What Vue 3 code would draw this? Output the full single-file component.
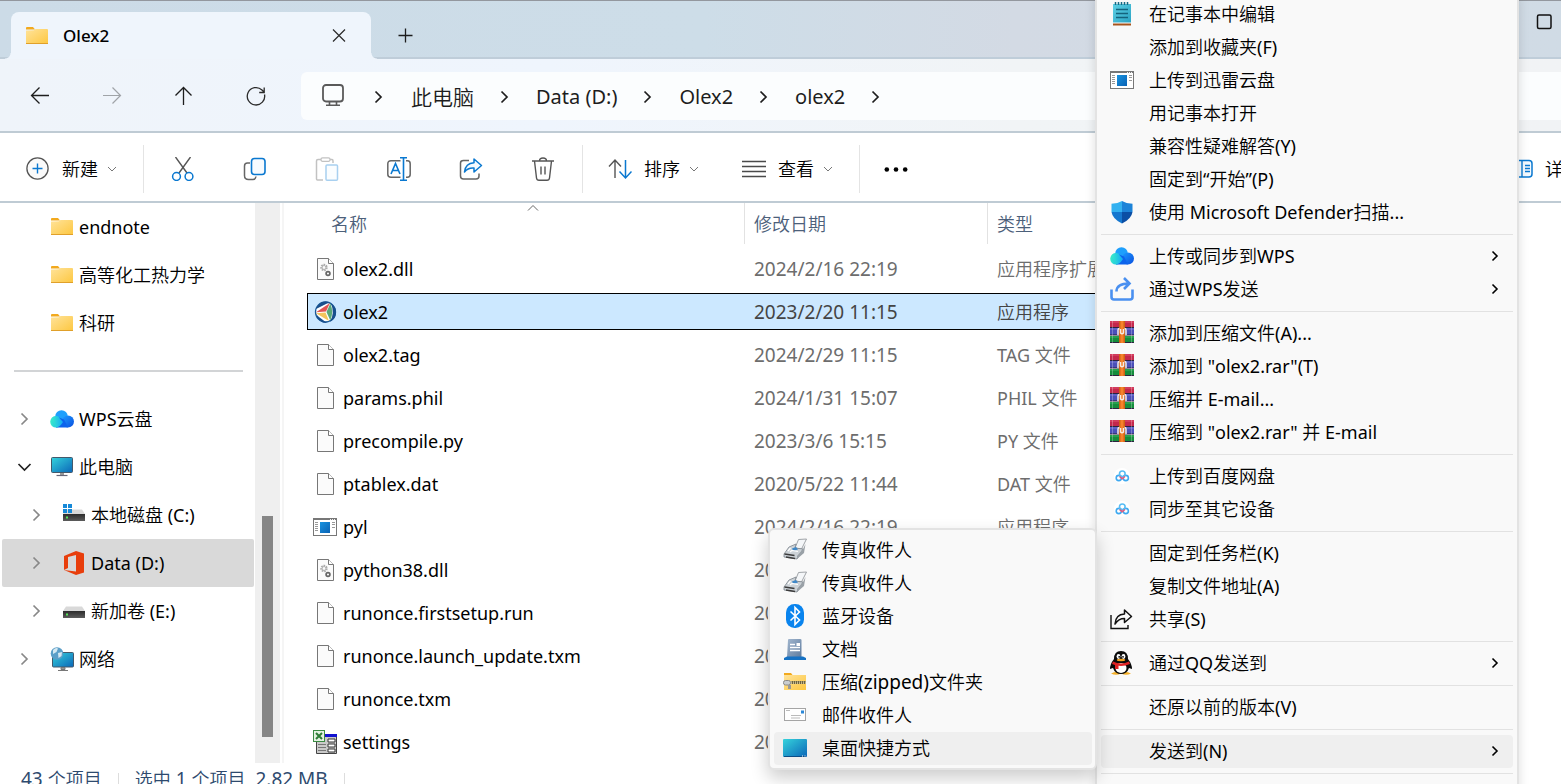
<script setup>
import { h } from 'vue'

// Splits a label into Chinese and Latin runs so that each script gets its own size.
const Mix = (props) =>
  (props.text.match(/[\u2e80-\u9fff]+|[^\u2e80-\u9fff]+/g) || []).map((run) =>
    h('span', { class: /[\u2e80-\u9fff]/.test(run) ? 'run-zh' : 'run-latin' }, run)
  )
Mix.props = ['text']

const crumbs = ['此电脑', 'Data (D:)', 'Olex2', 'olex2']
const tools = [
  ['cut', '剪切'], ['copy', '复制'], ['paste', '粘贴'],
  ['rename', '重命名'], ['share', '共享'], ['trash', '删除'],
]
const quick = ['endnote', '高等化工热力学', '科研']
const tree = [
  { text: 'WPS云盘', icon: 'cloud' },
  { text: '此电脑', icon: 'pc', open: true },
  { text: '本地磁盘 (C:)', icon: 'diskwin', sub: true },
  { text: 'Data (D:)', icon: 'office', sub: true, active: true },
  { text: '新加卷 (E:)', icon: 'disk', sub: true },
  { text: '网络', icon: 'network' },
]
const files = [
  ['dll', 'olex2.dll', '2024/2/16 22:19', '应用程序扩展'],
  ['olex', 'olex2', '2023/2/20 11:15', '应用程序'],
  ['file', 'olex2.tag', '2024/2/29 11:15', 'TAG 文件'],
  ['file', 'params.phil', '2024/1/31 15:07', 'PHIL 文件'],
  ['file', 'precompile.py', '2023/3/6 15:15', 'PY 文件'],
  ['file', 'ptablex.dat', '2020/5/22 11:44', 'DAT 文件'],
  ['program', 'pyl', '2024/2/16 22:19', '应用程序'],
  ['dll', 'python38.dll', '20', ''],
  ['file', 'runonce.firstsetup.run', '20', ''],
  ['file', 'runonce.launch_update.txm', '20', ''],
  ['file', 'runonce.txm', '20', ''],
  ['xls', 'settings', '20', ''],
]
const menu = [
  [['在记事本中编辑', 'notepad'], ['添加到收藏夹(F)'], ['上传到迅雷云盘', 'program'], ['用记事本打开'],
    ['兼容性疑难解答(Y)'], ['固定到“开始”(P)'], ['使用 Microsoft Defender扫描...', 'shield']],
  [['上传或同步到WPS', 'cloud', true], ['通过WPS发送', 'wpssend', true]],
  [['添加到压缩文件(A)...', 'rar'], ['添加到 "olex2.rar"(T)', 'rar'], ['压缩并 E-mail...', 'rar'],
    ['压缩到 "olex2.rar" 并 E-mail', 'rar']],
  [['上传到百度网盘', 'baidu'], ['同步至其它设备', 'baidu']],
  [['固定到任务栏(K)'], ['复制文件地址(A)'], ['共享(S)', 'shareout']],
  [['通过QQ发送到', 'qq', true]],
  [['还原以前的版本(V)']],
  [['发送到(N)', '', true]],
]
const sendTo = [
  ['传真收件人', 'fax'], ['传真收件人', 'fax'], ['蓝牙设备', 'bt'], ['文档', 'docs'],
  ['压缩(zipped)文件夹', 'zip'], ['邮件收件人', 'mail'], ['桌面快捷方式', 'desktop'],
]
</script>

<template>
  <div class="window">
    <svg class="sheet" aria-hidden="true">
      <defs>
        <linearGradient id="gFolder" x1="0" y1="0" x2="1" y2="1"><stop offset="0" stop-color="#ffe39a" /><stop offset="1" stop-color="#fdc740" /></linearGradient>
        <linearGradient id="gScreen" x1="0" y1="0" x2="1" y2="1"><stop offset="0" stop-color="#35d3dc" /><stop offset="1" stop-color="#0b66b8" /></linearGradient>
        <linearGradient id="gCloud" x1="0" y1="0" x2="1" y2="0"><stop offset="0" stop-color="#38ecc8" /><stop offset="1" stop-color="#12a8f8" /></linearGradient>
        <linearGradient id="gCloudB" x1="0" y1="0" x2="1" y2="1"><stop offset="0" stop-color="#1d9bff" /><stop offset="1" stop-color="#0a4fe0" /></linearGradient>
        <linearGradient id="gApp" x1="0" y1="0" x2="1" y2="1"><stop offset="0" stop-color="#1893e0" /><stop offset="1" stop-color="#0a62b4" /></linearGradient>
        <linearGradient id="gNote" x1="0" y1="0" x2="1" y2="1"><stop offset="0" stop-color="#5fd0e4" /><stop offset="1" stop-color="#2aa3c4" /></linearGradient>
        <linearGradient id="gDoc" x1="0" y1="0" x2="1" y2="1"><stop offset="0" stop-color="#a3b7cf" /><stop offset="1" stop-color="#5f7c9f" /></linearGradient>
        <linearGradient id="gDrive" x1="0" y1="0" x2="0" y2="1"><stop offset="0" stop-color="#2c2c2c" /><stop offset="1" stop-color="#5c5c5c" /></linearGradient>
        <linearGradient id="gGold" x1="0" y1="0" x2="1" y2="0"><stop offset="0" stop-color="#c65a10" /><stop offset=".5" stop-color="#ff8a30" /><stop offset="1" stop-color="#c65a10" /></linearGradient>
      </defs>
      <symbol id="folder" viewBox="0 0 24 24"><path d="M1 4a1 1 0 0 1 1-1h6l2 2.500H1z" fill="#f2a91d" /><path d="M1 6.500l8-.3 1.500-1.200H22a1 1 0 0 1 1 1V19a1 1 0 0 1-1 1H2a1 1 0 0 1-1-1z" fill="url(#gFolder)" /><path d="M1 19.500h22" stroke="#e0a02a" /></symbol>
      <symbol id="close" viewBox="0 0 24 24"><path d="M6 5.500l12 12M18 5.500L6 17.500" stroke="#2a2a2a" stroke-width="1.200" /></symbol>
      <symbol id="plus" viewBox="0 0 24 24"><path d="M12.500 4.500v14M5.500 11.500h14" stroke="#1d1d1d" stroke-width="1.300" /></symbol>
      <symbol id="back" viewBox="0 0 24 24"><path d="M21 11.500H3.500M11.500 3.500l-8 8 8 8" fill="none" stroke="currentColor" stroke-width="1.300" /></symbol>
      <symbol id="fwd" viewBox="0 0 24 24"><path d="M3 11.500h17.500M12.500 3.500l8 8-8 8" fill="none" stroke="#a0a4a8" stroke-width="1.200" /></symbol>
      <symbol id="up" viewBox="0 0 24 24"><path d="M11.500 21V3.500M3.500 11.500l8-8 8 8" fill="none" stroke="#1d1d1d" stroke-width="1.300" /></symbol>
      <symbol id="refresh" viewBox="0 0 24 24"><path d="M20.500 10.500A8.700 8.700 0 1 1 18 6l2 2M20.200 3.500V8.500h-5" fill="none" stroke="#2a2a2a" stroke-width="1.300" /></symbol>
      <symbol id="monitor" viewBox="0 0 24 24"><rect x="2" y="1" width="20" height="16.500" rx="3" fill="none" stroke="#5a5a5a" stroke-width="1.800" /><path d="M8.500 17.500v4M15.500 17.500v4M5 21.200h14" stroke="#5a5a5a" stroke-width="1.600" /></symbol>
      <symbol id="right" viewBox="0 0 24 24"><path d="M9.500 6.500l5.500 5.500L9.500 17.500" fill="none" stroke="currentColor" stroke-width="1.700" /></symbol>
      <symbol id="go" viewBox="0 0 24 24"><path d="M9.500 7.500l4.500 4.500-4.500 4.500" fill="none" stroke="currentColor" stroke-width="1.600" /></symbol>
      <symbol id="down" viewBox="0 0 24 24"><path d="M6.500 9l6 6 6-6" fill="none" stroke="currentColor" stroke-width="1.700" /></symbol>
      <symbol id="caret" viewBox="0 0 12 12"><path d="M2 4l4 4 4-4" fill="none" stroke="#777" /></symbol>
      <symbol id="new" viewBox="0 0 24 24"><circle cx="11.500" cy="11.500" r="10.600" fill="#fafafa" stroke="#555" stroke-width="1.300" /><path d="M11.500 6.500v10M6.500 11.500h10" stroke="#0a78d0" stroke-width="1.400" /></symbol>
      <symbol id="cut" viewBox="0 0 24 24"><path d="M4.500 0l11.500 16M19.500 0L8 16" stroke="#555" stroke-width="1.400" fill="none" /><circle cx="5.500" cy="19.500" r="3.900" fill="#fff" stroke="#0a78d0" stroke-width="1.500" /><circle cx="18" cy="19.500" r="3.900" fill="#fff" stroke="#0a78d0" stroke-width="1.500" /></symbol>
      <symbol id="copy" viewBox="0 0 24 24"><path d="M7 6H4.500Q1.500 6 1.500 9v9.500q0 4 4 4H10q2.500 0 3-3" fill="none" stroke="#666" stroke-width="1.500" /><rect x="8.500" y="1.500" width="13.500" height="16" rx="3" fill="#f7fbff" stroke="#0a78d0" stroke-width="1.600" /></symbol>
      <symbol id="paste" viewBox="0 0 24 24"><path d="M7 2.500H3q-1.500 0-1.500 1.500v18q0 1 1 1H8M14 2.500h3q1 0 1 1.500V6" fill="none" stroke="#c2c2c2" stroke-width="1.500" /><rect x="6" y=".8" width="9" height="3.500" rx="1.500" fill="#fff" stroke="#c2c2c2" stroke-width="1.300" /><rect x="11" y="8" width="11.500" height="15.200" rx="1" fill="#fafdff" stroke="#a8d0f0" stroke-width="1.500" /></symbol>
      <symbol id="rename" viewBox="0 0 24 24"><path d="M13.500 3.800H4q-3.200 0-3.200 3v10.500q0 3 3.200 3h9.500M19 3.800h1.500q2.700 0 2.700 3v10.500q0 3-2.700 3H19" fill="none" stroke="#666" stroke-width="1.500" /><path d="M4 17L8.500 6.500 13 17M5.500 13.500h6M16.500.8v22.400M13 .8h7M13 23.200h7" fill="none" stroke="#0a78d0" stroke-width="1.600" /></symbol>
      <symbol id="share" viewBox="0 0 24 24"><path d="M10 3.500H4.500Q1.500 3.500 1.500 6v13q0 3 3 3H17q3 0 3-3v-2.500" fill="none" stroke="#666" stroke-width="1.500" /><path d="M15 2l7.500 6.500L15 15v-4q-6-.5-9.500 4Q6.500 6 15 5.700z" fill="#f4faff" stroke="#0a78d0" stroke-width="1.500" stroke-linejoin="round" /></symbol>
      <symbol id="trash" viewBox="0 0 24 24"><path d="M1 4h22M3.500 4l2 17q.3 2.300 2.500 2.300h8q2.200 0 2.500-2.300l2-17M8.500 4q0-3 3.500-3t3.500 3M10 9.500v8M14 9.500v8" fill="none" stroke="#555" stroke-width="1.400" /></symbol>
      <symbol id="sort" viewBox="0 0 24 24"><path d="M7 21V3M1 9.500L7 3l6 6.500" fill="none" stroke="#555" stroke-width="1.400" /><path d="M17.500 3v18M11.500 14.500l6 6.500 6-6.500" fill="none" stroke="#0a78d0" stroke-width="1.500" /></symbol>
      <symbol id="lines" viewBox="0 0 24 24"><path d="M0 4.500h24M0 9.500h24M0 14.500h24M0 19.500h24" stroke="#4a4a4a" stroke-width="1.300" /></symbol>
      <symbol id="dots" viewBox="0 0 24 24"><circle cx="2.800" cy="12.500" r="2.300" /><circle cx="12" cy="12.500" r="2.300" /><circle cx="21.200" cy="12.500" r="2.300" /></symbol>
      <symbol id="details" viewBox="0 0 24 24"><rect x="1" y="3.500" width="22" height="16.500" rx="3" fill="#f4faff" stroke="#0a78d0" stroke-width="1.500" /><path d="M13 4v16M16 8.500h5M16 11.500h5M16 14.500h5" stroke="#0a78d0" stroke-width="1.400" /></symbol>
      <symbol id="max" viewBox="0 0 24 24"><rect x="5.500" y="5" width="13.500" height="13.500" rx="1.500" fill="none" stroke="#111" stroke-width="1.500" /></symbol>
      <symbol id="cloud" viewBox="0 0 24 24"><circle cx="11.500" cy="9.500" r="6.300" fill="#1e9ffc" /><circle cx="6" cy="14.800" r="5.800" fill="url(#gCloud)" /><circle cx="18" cy="14.600" r="6" fill="url(#gCloudB)" /><path d="M6 20.600h12l-4-8-5-2z" fill="#0c63ec" /><path d="M6 20.600Q10 20 13 15L8 9.400Q3 8.800 1.500 11.500z" fill="url(#gCloud)" /></symbol>
      <symbol id="pc" viewBox="0 0 24 24"><rect x="1.500" y="2.500" width="21" height="15" rx="1" fill="url(#gScreen)" stroke="#44596b" /><path d="M10 18h4v2h-4z" fill="#999" /><path d="M6.500 20.500h11" stroke="#667" stroke-width="1.200" /></symbol>
      <symbol id="network" viewBox="0 0 24 24"><rect x="2.500" y="5.500" width="21" height="14.500" rx="1" fill="url(#gScreen)" stroke="#44596b" /><path d="M8 23.500h10M11 20.500h4v2h-4z" stroke="#777" fill="#999" /><circle cx="7" cy="6.500" r="6.300" fill="#5c9fc8" /><path d="M3 3q3-3 5-1.500L6.500 5 3 7zM8 6l4-1-.5 4-3 2z" fill="#d6e9f2" /></symbol>
      <symbol id="disk" viewBox="0 0 24 24"><path d="M4 7.500h16l3 4.500H1z" fill="#d9d9d9" /><rect x="1" y="12" width="22" height="7" fill="url(#gDrive)" /><rect x="4" y="14.500" width="2" height="2" fill="#56e35a" /></symbol>
      <symbol id="diskwin" viewBox="0 0 24 24"><path d="M4 6.500h16l3 4.500H1z" fill="#d9d9d9" /><rect x="1" y="11" width="22" height="7" fill="url(#gDrive)" /><rect x="4" y="13.500" width="2" height="2" fill="#56e35a" /><path d="M1 1h4v4H1zM6 1h4v4H6zM1 6h4v4H1zM6 6h4v4H6z" fill="#1689d8" /></symbol>
      <symbol id="office" viewBox="0 0 24 24"><path d="M2 5l12-5 8 2.500v19L14 24 2 19l12 1.500V4L6 6v11l-4 2z" fill="#e83e0c" /></symbol>
      <symbol id="file" viewBox="0 0 24 24"><path d="M4.500 1.500h11l5 5v16h-16z" fill="#fbfbfb" stroke="#777" /><path d="M15.500 1.500v5h5" fill="#fff" stroke="#777" /></symbol>
      <symbol id="dll" viewBox="0 0 24 24"><path d="M4.500 1.500h11l5 5v16h-16z" fill="#fbfbfb" stroke="#777" /><path d="M15.500 1.500v5h5" fill="#fff" stroke="#777" /><circle cx="11" cy="10.500" r="2.600" fill="none" stroke="#aaa" stroke-width="2.200" stroke-dasharray="1.500 .8" /><circle cx="11" cy="10.500" r="2" fill="none" stroke="#b5b5b5" /><circle cx="15" cy="16.500" r="1.900" fill="none" stroke="#666" stroke-width="1.700" /></symbol>
      <symbol id="olex" viewBox="0 0 24 24"><circle cx="12.500" cy="12" r="10" fill="#fff" stroke="#1a5a98" stroke-width="1.300" /><path d="M16 2A10.500 10.500 0 0 0 3 9l12-6z" fill="#174f8d" /><path d="M3 14a10.500 10.500 0 0 0 11 9l-8-6z" fill="#174f8d" /><path d="M18 3.500a10.500 10.500 0 0 1-1 18.500q5-9 1-18.500z" fill="#174f8d" /><path d="M17 3L3 12.200l10-.7z" fill="#e05555" /><path d="M3 13.200L16 21l-3.500-8.500z" fill="#f3c55c" /><path d="M17.300 3.500L13.500 12l3.800 8.500q3.700-8.500 0-17z" fill="#58a878" /></symbol>
      <symbol id="program" viewBox="0 0 24 24"><rect x=".5" y="3.500" width="23" height="17" fill="#fff" stroke="#777" /><path d="M0 4.500h24" stroke="#777" /><path d="M17 4.500h5" stroke="#eee" stroke-dasharray="1 1" /><rect x="7" y="7" width="10" height="11" fill="url(#gApp)" /><path d="M2 7.500h3M2 9.500h3M2 11.500h3M2 13.500h3M2 15.500h3M19 7.500h3M19 9.500h3M19 12.500h3" stroke="#999" /></symbol>
      <symbol id="xls" viewBox="0 0 24 24"><path d="M3.500 4.500h20v19h-20z" fill="#c9c9c9" stroke="#444" /><path d="M12 4h12v3H12z" fill="#1212d0" /><path d="M5 14.500h8M5 17.500h8M5 20.500h8" stroke="#777" /><path d="M15 9h7v3h-7zM15 14h7v3h-7zM15 19h7v3h-7z" fill="#fff" stroke="#333" /><rect x=".5" y=".5" width="11" height="11" fill="#e4f2e2" stroke="#3a8a42" /><path d="M3 3l6 6M9 3L3 9" stroke="#2d7d36" stroke-width="2" /></symbol>
      <symbol id="notepad" viewBox="0 0 24 24"><rect x="3" y="2" width="18" height="19" fill="url(#gNote)" /><path d="M5.500 0v3M8.500 0v3M11.500 0v3M14.500 0v3M17.500 0v3" stroke="#176a84" stroke-width="1.500" /><path d="M6 7.500h12M6 11.500h12M6 15.500h12" stroke="#14637d" stroke-width="1.500" /><path d="M3 21h18" stroke="#fff" stroke-width="1" /><path d="M3 22.500h18" stroke="#a8541c" stroke-width="2" /></symbol>
      <symbol id="shield" viewBox="0 0 24 24"><path d="M12 1q4 2.500 10.500 2.800V12H12z" fill="#1c83d8" /><path d="M12 1Q8 3.500 1.500 3.800V12H12z" fill="#33b1f0" /><path d="M1.500 12H12v11.500Q2.500 19 1.500 12z" fill="#1577cf" /><path d="M22.500 12H12v11.500Q21.500 19 22.500 12z" fill="#0b4fa5" /></symbol>
      <symbol id="wpssend" viewBox="0 0 24 24"><path d="M1.500 12.500v7.500q0 2.500 2.500 2.500h16q2.500 0 2.500-2.500v-7.500M6.500 14.500Q6.500 6.500 19 6.500M14 1l5.500 5.500-5.500 5.500" fill="none" stroke="#4a90f0" stroke-width="2.600" /></symbol>
      <symbol id="rar" viewBox="0 0 24 24"><path d="M0 0h24v6.500H0z" fill="#c4284c" /><path d="M0 7h24v7H0z" fill="#4a4fb8" /><path d="M0 15h24v7H0z" fill="#158c3c" /><path d="M0 1h24" stroke="#e0506e" /><path d="M0 8h24" stroke="#7277d6" /><path d="M0 16h24" stroke="#3bb45f" /><path d="M0 6.500h24M0 14h24M0 21.500h24" stroke="#2b2340" /><path d="M2.500 0v22M21.500 0v22" stroke="#ffffff44" /><path d="M9 0h6v22H9z" fill="url(#gGold)" /><path d="M8 14V9q0-1.500 1.500-1.500M16 14V9q0-1.500-1.500-1.500M10.500 8v4q1.500 1.500 3 0V8" fill="none" stroke="#f4ece8" stroke-width="1.500" /></symbol>
      <symbol id="baidu" viewBox="0 0 24 24"><circle cx="12" cy="12" r="8" fill="#fff" /><circle cx="8.800" cy="14" r="2.600" fill="none" stroke="#3fa9f0" stroke-width="1.600" /><circle cx="15.800" cy="14" r="2.600" fill="none" stroke="#3fa9f0" stroke-width="1.600" /><circle cx="12.300" cy="9.800" r="2.800" fill="none" stroke="#58bdf4" stroke-width="1.600" /><path d="M9.500 12.500l2.700 2.200 2.700-2.200" fill="none" stroke="#e9597a" stroke-width="1.500" /></symbol>
      <symbol id="shareout" viewBox="0 0 24 24"><path d="M1 8v13.500h17V18" fill="none" stroke="#111" stroke-width="1.400" /><path d="M14.500 3l7 6.500-7 6v-4q-6 0-9.500 5.500Q5.500 7.500 14.500 7z" fill="none" stroke="#111" stroke-width="1.500" stroke-linejoin="round" /></symbol>
      <symbol id="qq" viewBox="0 0 24 24"><path d="M1 22.500q5-3 10-1 5-2 10 1-5 2.500-10 0-5 2.500-10 0z" fill="#f4b02a" /><path d="M11 0q7 0 7 8 4 5 4 10l-3-1q-2 6-8 6t-8-6l-3 1q0-5 4-10 0-8 7-8z" fill="#0b0b0b" /><ellipse cx="11" cy="17" rx="5.500" ry="5" fill="#fff" /><ellipse cx="8.500" cy="5.500" rx="1.900" ry="2.400" fill="#fff" /><ellipse cx="13.500" cy="5.500" rx="1.900" ry="2.400" fill="#fff" /><circle cx="9.200" cy="5.800" r=".9" /><circle cx="13" cy="5.800" r=".9" /><ellipse cx="11" cy="9" rx="4.200" ry="1.200" fill="#f4a01c" /><path d="M3 10.500q8 4 16 0l1 2.500q-9 4-18 0z" fill="#e02424" /><path d="M5 13h3.500v5H5z" fill="#e02424" /></symbol>
      <symbol id="fax" viewBox="0 0 24 24"><path d="M12 10l3.500-8.500 8-.5-5 10z" fill="#f4f6f8" stroke="#8a8f94" stroke-width=".8" /><path d="M1 16L6 9l7-3-1 4 8 1-6 10-13-2z" fill="#ccd2d7" stroke="#7c848b" stroke-width=".8" /><path d="M20 11l2.500-5-1.500 9-7 6v-3z" fill="#9aa1a7" /><path d="M9 10.500l4-1.500 2 2.500-5 1.500z" fill="#3f88c8" /><path d="M1.500 16l10 1.500M3 19l9 1.500" stroke="#3c3c3c" stroke-width="1.400" /><path d="M5 13l2.500-3M7 14l2-1.500 6 1" stroke="#fff" stroke-width="1.200" fill="none" /></symbol>
      <symbol id="bt" viewBox="0 0 24 24"><rect x="3" y="0" width="18" height="24" rx="8.500" fill="#0a84ee" /><path d="M7.500 7.500l9 8.500-4.500 4.500v-17L16.500 8l-9 8.500" fill="none" stroke="#fff" stroke-width="1.600" /></symbol>
      <symbol id="docs" viewBox="0 0 24 24"><path d="M5 3q0-1 1-1h11q1.500 0 1.500 1v17H4z" fill="url(#gDoc)" /><path d="M7 7.500h5M7 10.500h10M7 13.500h10" stroke="#fff" stroke-width="1.300" /><path d="M13.500 6h3.500v3h-3.500z" fill="#fff" /><path d="M4 19.500h16l3 1.500v2H1v-2z" fill="#1672c4" /></symbol>
      <symbol id="zip" viewBox="0 0 24 24"><path d="M1 3h7l1.500 2H1z" fill="#f2a91d" /><path d="M1 5h22v15H1z" fill="url(#gFolder)" /><path d="M8 12.500h15" stroke="#6d6240" stroke-width="3" /><path d="M8 12h15M8 13.200h15" stroke="#efe2b0" stroke-dasharray="1 1" /><rect x=".5" y="10.500" width="7" height="4.500" rx="2" fill="#c9cdd0" stroke="#888" /><path d="M6.500 15v4" stroke="#999" stroke-width="3" /></symbol>
      <symbol id="mail" viewBox="0 0 24 24"><rect x="1.500" y="5.500" width="21" height="12" fill="#fff" stroke="#a5a5a5" /><rect x="18" y="7.500" width="3" height="3" fill="#2b88d8" /><path d="M3 7.500h4M8 12.500h10M8 15h9" stroke="#bbb" /></symbol>
      <symbol id="desktop" viewBox="0 0 24 24"><rect x="0" y="3" width="24" height="18" rx="1" fill="url(#gScreen)" /><path d="M1 20.500h22" stroke="#0c4d86" /><path d="M19 20h1M21.500 20h1" stroke="#fff" /></symbol>
    </svg>

    <header class="titlebar">
      <div class="tab">
        <svg class="ic"><use href="#folder" /></svg>
        <span class="tab-name">Olex2</span>
        <button class="bare" aria-label="关闭标签页"><svg class="ic"><use href="#close" /></svg></button>
      </div>
      <button class="bare add" aria-label="新建标签页"><svg class="ic"><use href="#plus" /></svg></button>
      <button class="bare max" aria-label="最大化"><svg class="ic"><use href="#max" /></svg></button>
    </header>

    <nav class="navbar">
      <button v-for="n in [['back', '后退'], ['fwd', '前进'], ['up', '向上'], ['refresh', '刷新']]" :key="n[0]" class="bare wide" :aria-label="n[1]">
        <svg class="ic"><use :href="'#' + n[0]" /></svg>
      </button>
      <div class="address">
        <svg class="ic"><use href="#monitor" /></svg>
        <div class="crumbs">
          <svg class="ic sep first"><use href="#right" /></svg>
          <template v-for="c in crumbs" :key="c">
            <a href="#" class="crumb"><Mix :text="c" /></a>
            <svg class="ic sep"><use href="#right" /></svg>
          </template>
        </div>
      </div>
    </nav>

    <div class="toolbar">
      <button class="bare cmd"><svg class="ic"><use href="#new" /></svg><Mix text="新建" /><svg class="caret"><use href="#caret" /></svg></button>
      <span class="rule wide-gap"></span>
      <button v-for="t in tools" :key="t[0]" class="bare wide" :aria-label="t[1]"><svg class="ic"><use :href="'#' + t[0]" /></svg></button>
      <span class="rule"></span>
      <button class="bare cmd sort"><svg class="ic"><use href="#sort" /></svg><Mix text="排序" /><svg class="caret"><use href="#caret" /></svg></button>
      <button class="bare cmd view"><svg class="ic"><use href="#lines" /></svg><Mix text="查看" /><svg class="caret"><use href="#caret" /></svg></button>
      <span class="rule wide-gap"></span>
      <button class="bare more" aria-label="更多"><svg class="ic"><use href="#dots" /></svg></button>
      <button class="bare cmd details"><svg class="ic"><use href="#details" /></svg><Mix text="详" /></button>
    </div>

    <div class="body">
      <aside class="side">
        <ul class="tree">
          <li v-for="q in quick" :key="q" class="node">
            <span class="twist"></span><svg class="ic"><use href="#folder" /></svg><span><Mix :text="q" /></span>
          </li>
          <li class="divider"></li>
          <li v-for="t in tree" :key="t.text" class="node" :class="{ sub: t.sub, active: t.active }">
            <span class="twist"><svg class="ic" :class="{ open: t.open }"><use :href="t.open ? '#down' : '#right'" /></svg></span>
            <svg class="ic"><use :href="'#' + t.icon" /></svg><span><Mix :text="t.text" /></span>
          </li>
        </ul>
        <div class="scroll"><div class="thumb"></div></div>
      </aside>

      <main class="list">
        <svg class="sorted" viewBox="0 0 12 6"><path d="M1 5.500l5-5 5 5" fill="none" stroke="#666" /></svg>
        <table>
          <colgroup><col class="c-name"><col class="c-date"><col></colgroup>
          <thead><tr><th><Mix text="名称" /></th><th><Mix text="修改日期" /></th><th><Mix text="类型" /></th></tr></thead>
          <tbody>
            <tr v-for="f in files" :key="f[1]" :class="{ selected: f[1] === 'olex2' }">
              <td><div class="name"><svg class="ic"><use :href="'#' + f[0]" /></svg><span>{{ f[1] }}</span></div></td>
              <td class="date">{{ f[2] }}</td>
              <td class="kind"><Mix :text="f[3]" /></td>
            </tr>
          </tbody>
        </table>
      </main>
    </div>

    <footer class="status">
      <span><Mix text="43 个项目" /></span><i></i><span><Mix text="选中 1 个项目" /></span><span class="size"><Mix text="2.82 MB" /></span><i></i>
    </footer>

    <div class="menu context" role="menu">
      <div v-for="(g, gi) in menu" :key="gi" class="group">
        <button v-for="m in g" :key="m[0]" class="item" :class="{ hot: m[0] === '发送到(N)' }" role="menuitem">
          <svg class="ic"><use v-if="m[1]" :href="'#' + m[1]" /></svg>
          <span class="label"><Mix :text="m[0]" /></span>
          <svg v-if="m[2]" class="ic"><use href="#go" /></svg>
        </button>
      </div>
    </div>

    <div class="menu sendto" role="menu">
      <button v-for="(m, i) in sendTo" :key="i" class="item" :class="{ hot: i === 6 }" role="menuitem">
        <svg class="ic"><use :href="'#' + m[1]" /></svg>
        <span class="label"><Mix :text="m[0]" /></span>
      </button>
    </div>
  </div>
</template>

<style>
body { margin: 0; overflow: hidden; }
.run-zh { font-size: 18px; font-weight: 350; }
.run-latin { font-size: 18px; white-space: pre; }
.crumb .run-zh { font-size: 21px; }
.crumb .run-latin { font-size: 20px; }
.status .run-latin, .sendto .run-latin { font-size: 19px; }
</style>

<style scoped>
.window {
  position: relative;
  height: 100vh;
  display: flex;
  flex-direction: column;
  overflow: hidden;
  background: #fff;
  color: #000;
  font: 18px/24px "Noto Sans", "Noto Sans CJK SC", sans-serif;
}
.sheet { position: absolute; width: 0; height: 0; }
.ic { width: 24px; height: 24px; flex: none; display: block; }
.caret { width: 12px; height: 12px; flex: none; }
.bare { border: 0; padding: 0; background: none; color: inherit; font: inherit; display: flex; align-items: center; justify-content: center; flex: none; }
.wide { width: 72px; }

.titlebar {
  display: flex;
  align-items: center;
  height: 59px;
  flex: none;
  box-sizing: border-box;
  border-top: 1px solid #93979e;
  padding-left: 11px;
  background: linear-gradient(90deg, #ccdbe7, #cddde8 45%, #d3dae4 65%, #d0dbe5);
  box-shadow: inset 0 -2px #bfcdd9;
}
.tab {
  position: relative;
  align-self: flex-end;
  width: 360px;
  height: 47px;
  box-sizing: border-box;
  padding: 0 20px 0 14px;
  display: flex;
  align-items: center;
  gap: 14px;
  background: #eff5fc;
  border-radius: 8px 8px 0 0;
}
.tab::before, .tab::after { content: ""; position: absolute; bottom: 0; width: 6px; height: 6px; }
.tab::before { right: 100%; background: radial-gradient(circle at 0 0, transparent 5px, #eff5fc 6px); }
.tab::after { left: 100%; background: radial-gradient(circle at 100% 0, transparent 5px, #eff5fc 6px); }
.tab-name { flex: 1; font-weight: 500; font-size: 17px; }
.add { margin-left: 22px; margin-top: 12px; }
.max { margin-left: auto; margin-right: 5px; margin-bottom: 16px; }

.navbar {
  display: flex;
  align-items: center;
  height: 74px;
  flex: none;
  box-sizing: border-box;
  padding: 2px 0 0 4px;
  border-bottom: 2px solid #bfcbd4;
  background: linear-gradient(90deg, #eff4fa, #eff5fd 35%, #f1f4f6 65%, #f1f3f5);
  color: #1d1d1d;
}
.address {
  flex: 1;
  height: 48px;
  margin-left: 9px;
  padding-left: 20px;
  display: flex;
  align-items: center;
  border-radius: 6px 0 0 6px;
  background: #fbfdfe;
}
.crumbs { display: flex; align-items: center; padding-top: 2px; }
.sep { margin: 0 20px 0 18px; }
.sep.first { margin: 0 21px; }
.crumb { color: inherit; text-decoration: none; }

.toolbar {
  display: flex;
  align-items: center;
  height: 70px;
  flex: none;
  box-sizing: border-box;
  padding: 3px 0 0 26px;
  border-bottom: 2px solid #bfcbd4;
}
.cmd { gap: 12px; }
.cmd .caret { margin-left: -4px; }
.rule { width: 1px; height: 48px; margin: 0 25px 0 3px; background: #e4e4e4; }
.rule.wide-gap { margin: 0 3px 0 25px; }
.view { margin-left: 42px; }
.more { margin-left: 21px; }
.details { margin-left: auto; margin-right: -2px; }

.body { flex: 1; min-height: 0; display: flex; }
.side { width: 284px; flex: none; display: flex; border-right: 2px solid #f5f5f5; box-sizing: border-box; }
.tree { flex: 1; margin: 0; padding: 0; list-style: none; }
.node { height: 48px; display: flex; align-items: center; gap: 5px; padding-left: 10px; margin: 0 1px 0 2px; box-sizing: border-box; border-radius: 2px; }
.node.sub { padding-left: 22px; }
.node.active { background: #d9d9d9; }
.twist { width: 33px; color: #888; }
.twist .open { color: #222; }
.divider { height: 48px; display: flex; align-items: center; padding: 0 12px 0 14px; }
.divider::after { content: ""; flex: 1; height: 2px; background: #d2d4d6; }
.scroll { width: 25px; margin-right: 2px; background: #efefef; display: flex; flex-direction: column; align-items: center; justify-content: flex-end; }
.thumb { width: 11px; height: 221px; margin-bottom: 26px; background: #868686; }

.list { flex: 1; min-width: 0; padding: 0 60px 0 23px; overflow: hidden; position: relative; }
.sorted { position: absolute; left: 243px; top: 2px; width: 12px; height: 6px; }
table { width: 100%; table-layout: fixed; border-collapse: separate; border-spacing: 0 6px; margin-top: -6px; }
.c-name { width: 437px; }
.c-date { width: 243px; }
th { height: 41px; padding: 0 0 0 9px; box-sizing: border-box; text-align: left; font-weight: 400; color: #4c607a; border-left: 1px solid #e2e2e2; }
th:first-child { padding-left: 23px; border-left-color: transparent; }
td { height: 37px; box-sizing: border-box; padding: 0 0 0 10px; color: #6d6d6d; white-space: nowrap; border: solid transparent; border-width: 1px 0; }
td:first-child { padding-left: 5px; border-left-width: 1px; color: #000; }
.name { display: flex; align-items: center; gap: 6px; }
.date { font-size: 19px; }
.selected td { background: #cce8ff; border-color: #000; color: #444; }
.selected td:first-child { color: #000; }

.status { height: 21px; flex: none; display: flex; align-items: flex-start; padding: 4px 0 0 21px; box-sizing: border-box; color: #2e4a6e; white-space: nowrap; }
.status i { width: 1px; height: 20px; margin: 6px 16px 0; background: #ddd; }
.status .size { margin-left: 10px; }

.menu { position: absolute; box-sizing: border-box; background: #f9f9f9; border: 2px solid #e3e3e3; }
.context { top: -4px; right: 42px; width: 424px; padding: 0 4px 20px; box-shadow: 0 0 10px #0002; }
.sendto { top: 528px; right: 464px; width: 329px; padding: 4px 3px 3px 4px; border-radius: 6px; box-shadow: 0 8px 18px #0003; }
.item { width: 100%; height: 33px; display: flex; align-items: center; gap: 15px; padding: 0 6px 2px 9px; border: 0; border-radius: 4px; background: none; font: inherit; color: #000; text-align: left; }
.item.hot { background: #efefef; }
.label { flex: 1; white-space: nowrap; }
.group::after { content: ""; display: block; height: 1px; margin: 5px 0; background: #e2e2e2; }
</style>
